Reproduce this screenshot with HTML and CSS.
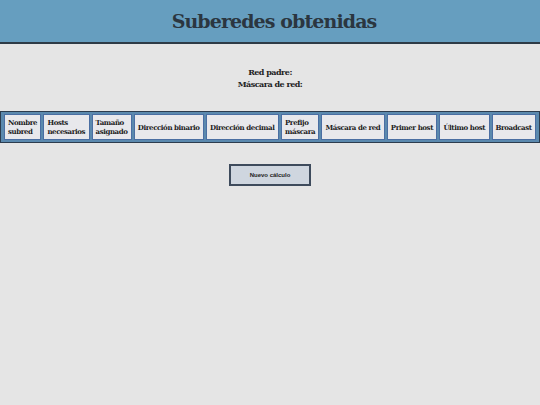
FILE: index.html
```html
<!DOCTYPE html>
<html lang="es">
<head>
  <meta charset="utf-8">
  <title>Suberedes obtenidas</title>
  <link rel="stylesheet" href="styles.css">
</head>
<body>
  <header class="cabecera">
    <h1>Suberedes obtenidas</h1>
  </header>

  <div class="datos">
    <p>Red padre:</p>
    <p>Máscara de red:</p>
  </div>

  <table class="tabla">
    <tr>
      <th>Nombre<br>subred</th>
      <th>Hosts<br>necesarios</th>
      <th>Tamaño<br>asignado</th>
      <th>Dirección binario</th>
      <th>Dirección decimal</th>
      <th>Prefijo<br>máscara</th>
      <th>Máscara de red</th>
      <th>Primer host</th>
      <th>Último host</th>
      <th>Broadcast</th>
    </tr>
  </table>

  <div class="acciones">
    <button class="boton">Nuevo cálculo</button>
  </div>
</body>
</html>
```

FILE: styles.css
```css
body{
  margin:0;
  background-color:#e5e5e5;
  font-family:"DejaVu Serif","Liberation Serif",serif;
  color:#222;
}

.cabecera{
  background-color:#669ebf;
  border-bottom:2px solid #2e3b46;
  height:42px;
  display:flex;
  align-items:center;
  justify-content:center;
  padding-left:8px;
}

.cabecera h1{
  margin:0;
  font-size:19px;
  font-weight:bold;
  color:#2b3640;
  letter-spacing:-0.9px;
}

.datos{
  margin-top:22px;
  text-align:center;
  font-size:8px;
  font-weight:bold;
  line-height:12px;
}

.datos p{
  margin:0;
  letter-spacing:-0.5px;
}

.tabla{
  margin-top:21px;
  width:100%;
  border:1px solid #2c3c4e;
  background-color:#5b89ae;
  border-spacing:2px;
  padding:0 1px;
}

.tabla th{
  background-color:#e8e8ec;
  border:1px solid #4a6ea3;
  font-size:7px;
  font-weight:bold;
  text-align:left;
  padding:1px 3px;
  height:22px;
  line-height:9px;
  letter-spacing:-0.4px;
  white-space:nowrap;
}

.acciones{
  margin-top:21px;
  display:flex;
  justify-content:center;
}

.boton{
  width:82px;
  height:22px;
  background-color:#cfd6df;
  border:2px solid #3e4b5c;
  font-family:"Liberation Sans",Arial,sans-serif;
  font-size:6px;
  font-weight:bold;
  color:#222;
}
```
